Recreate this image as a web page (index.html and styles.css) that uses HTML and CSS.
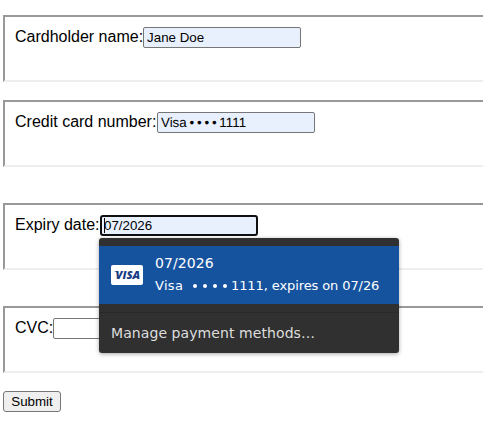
FILE: index.html
```html
<!DOCTYPE html>
<html lang="en">
<head>
<meta charset="utf-8">
<title>Payment</title>
<link rel="stylesheet" href="styles.css">
</head>
<body>
<form class="form">
  <div class="field">
    <label for="name">Cardholder name:</label><input class="input filled" id="name" type="text" value="Jane Doe">
  </div>
  <div class="field">
    <label class="number-label" for="number">Credit card number:</label><input class="input filled number" id="number" type="text" value="Visa • • • • 1111">
  </div>
  <div class="field spaced">
    <label class="expiry-label" for="expiry">Expiry date:</label>
    <div class="anchor">
      <input class="input filled focused" id="expiry" type="text" value="07/2026">
      <span class="caret"></span>
      <div class="menu">
        <div class="option">
          <svg class="card" width="32" height="20" viewBox="0 0 32 20" aria-hidden="true">
            <rect width="32" height="20" rx="2" fill="#fff"/>
            <path d="M3.4 6.2H6.6L7.4 8.2Q5.6 6.8 3.4 6.4Z" fill="#173a82"/>
            <text class="brand" x="4.6" y="14" textLength="24.6" lengthAdjust="spacingAndGlyphs">VISA</text>
          </svg>
          <div class="details">
            <div class="primary">07/2026</div>
            <div class="secondary"><span class="network">Visa</span><span class="dots"><i></i><i></i><i></i><i></i></span><span class="summary">1111, expires on 07/26</span></div>
          </div>
        </div>
        <div class="manage">Manage payment methods…</div>
      </div>
    </div>
  </div>
  <div class="field spaced">
    <label for="cvc">CVC:</label><input class="input" id="cvc" type="text">
  </div>
  <button class="submit" type="button">Submit</button>
</form>
</body>
</html>
```
FILE: styles.css
```css
* {
  box-sizing: border-box;
}

html {
  overflow: hidden;
}

body {
  margin: 0;
  background: #fff;
  color: #000;
  font: 16px/18px "Liberation Sans", Arial, sans-serif;
}

.form {
  width: 500px;
  padding: 15px 0 0 3px;
}

.field {
  display: flex;
  align-items: flex-start;
  height: 67px;
  padding: 10px;
  border: 2px solid;
  border-color: #999 #eee #eee #999;
  margin-bottom: 18px;
}

.field + .spaced {
  margin-top: 36px;
}

label {
  padding-top: 1px;
  white-space: nowrap;
}

.number-label {
  width: 142px;
}

.expiry-label {
  width: 85px;
}

.input {
  display: block;
  width: 158px;
  height: 21px;
  padding: 1px 3px;
  border: 1px solid #767676;
  border-radius: 2px;
  outline: 0;
  background: #fff;
  color: #000;
  font: 13.333px "Liberation Sans", Arial, sans-serif;
}

.filled {
  background: #e8f0fe;
}

.number {
  word-spacing: -0.9px;
  font-kerning: normal;
  text-rendering: geometricPrecision;
}

.focused {
  border: 2px solid #101010;
  border-radius: 3px;
  padding: 0 2px;
}

.anchor {
  position: relative;
}

.caret {
  position: absolute;
  left: 4px;
  top: 3px;
  width: 1px;
  height: 15px;
  background: #000;
}

.menu {
  position: absolute;
  z-index: 1;
  left: -1px;
  top: 23px;
  width: 300px;
  height: 115px;
  padding-top: 8px;
  border-radius: 3px;
  background: #303030;
  box-shadow: 0 1px 4px rgba(0, 0, 0, 0.35);
  color: #fff;
  font-family: "DejaVu Sans", sans-serif;
}

.option {
  display: flex;
  align-items: center;
  gap: 12px;
  height: 58px;
  padding-left: 12px;
  background: #16539f;
}

.card {
  flex: none;
}

.brand {
  fill: #173a82;
  font: italic 800 11px "Open Sans", sans-serif;
}

.primary {
  height: 22px;
  font-size: 14px;
  line-height: 20px;
  letter-spacing: 0.1px;
}

.secondary {
  display: flex;
  height: 22px;
  font-size: 13px;
  line-height: 21px;
  white-space: nowrap;
}

.network {
  width: 37px;
  letter-spacing: 0.3px;
}

.dots {
  display: flex;
  align-items: center;
  gap: 6px;
  width: 39px;
  padding-left: 1px;
}

.dots i {
  width: 4px;
  height: 4px;
  border-radius: 50%;
  background: #fff;
}

.summary {
  letter-spacing: -0.1px;
}

.manage {
  margin-top: 8px;
  padding-left: 12px;
  border-top: 1px solid #292929;
  color: #dedede;
  font-size: 14px;
  letter-spacing: 0.08px;
  line-height: 40px;
}

.submit {
  display: block;
  width: 58px;
  height: 21px;
  padding: 0;
  border: 1px solid #767676;
  border-radius: 3px;
  background: #efefef;
  color: #000;
  font: 13.333px "Liberation Sans", Arial, sans-serif;
}
```
